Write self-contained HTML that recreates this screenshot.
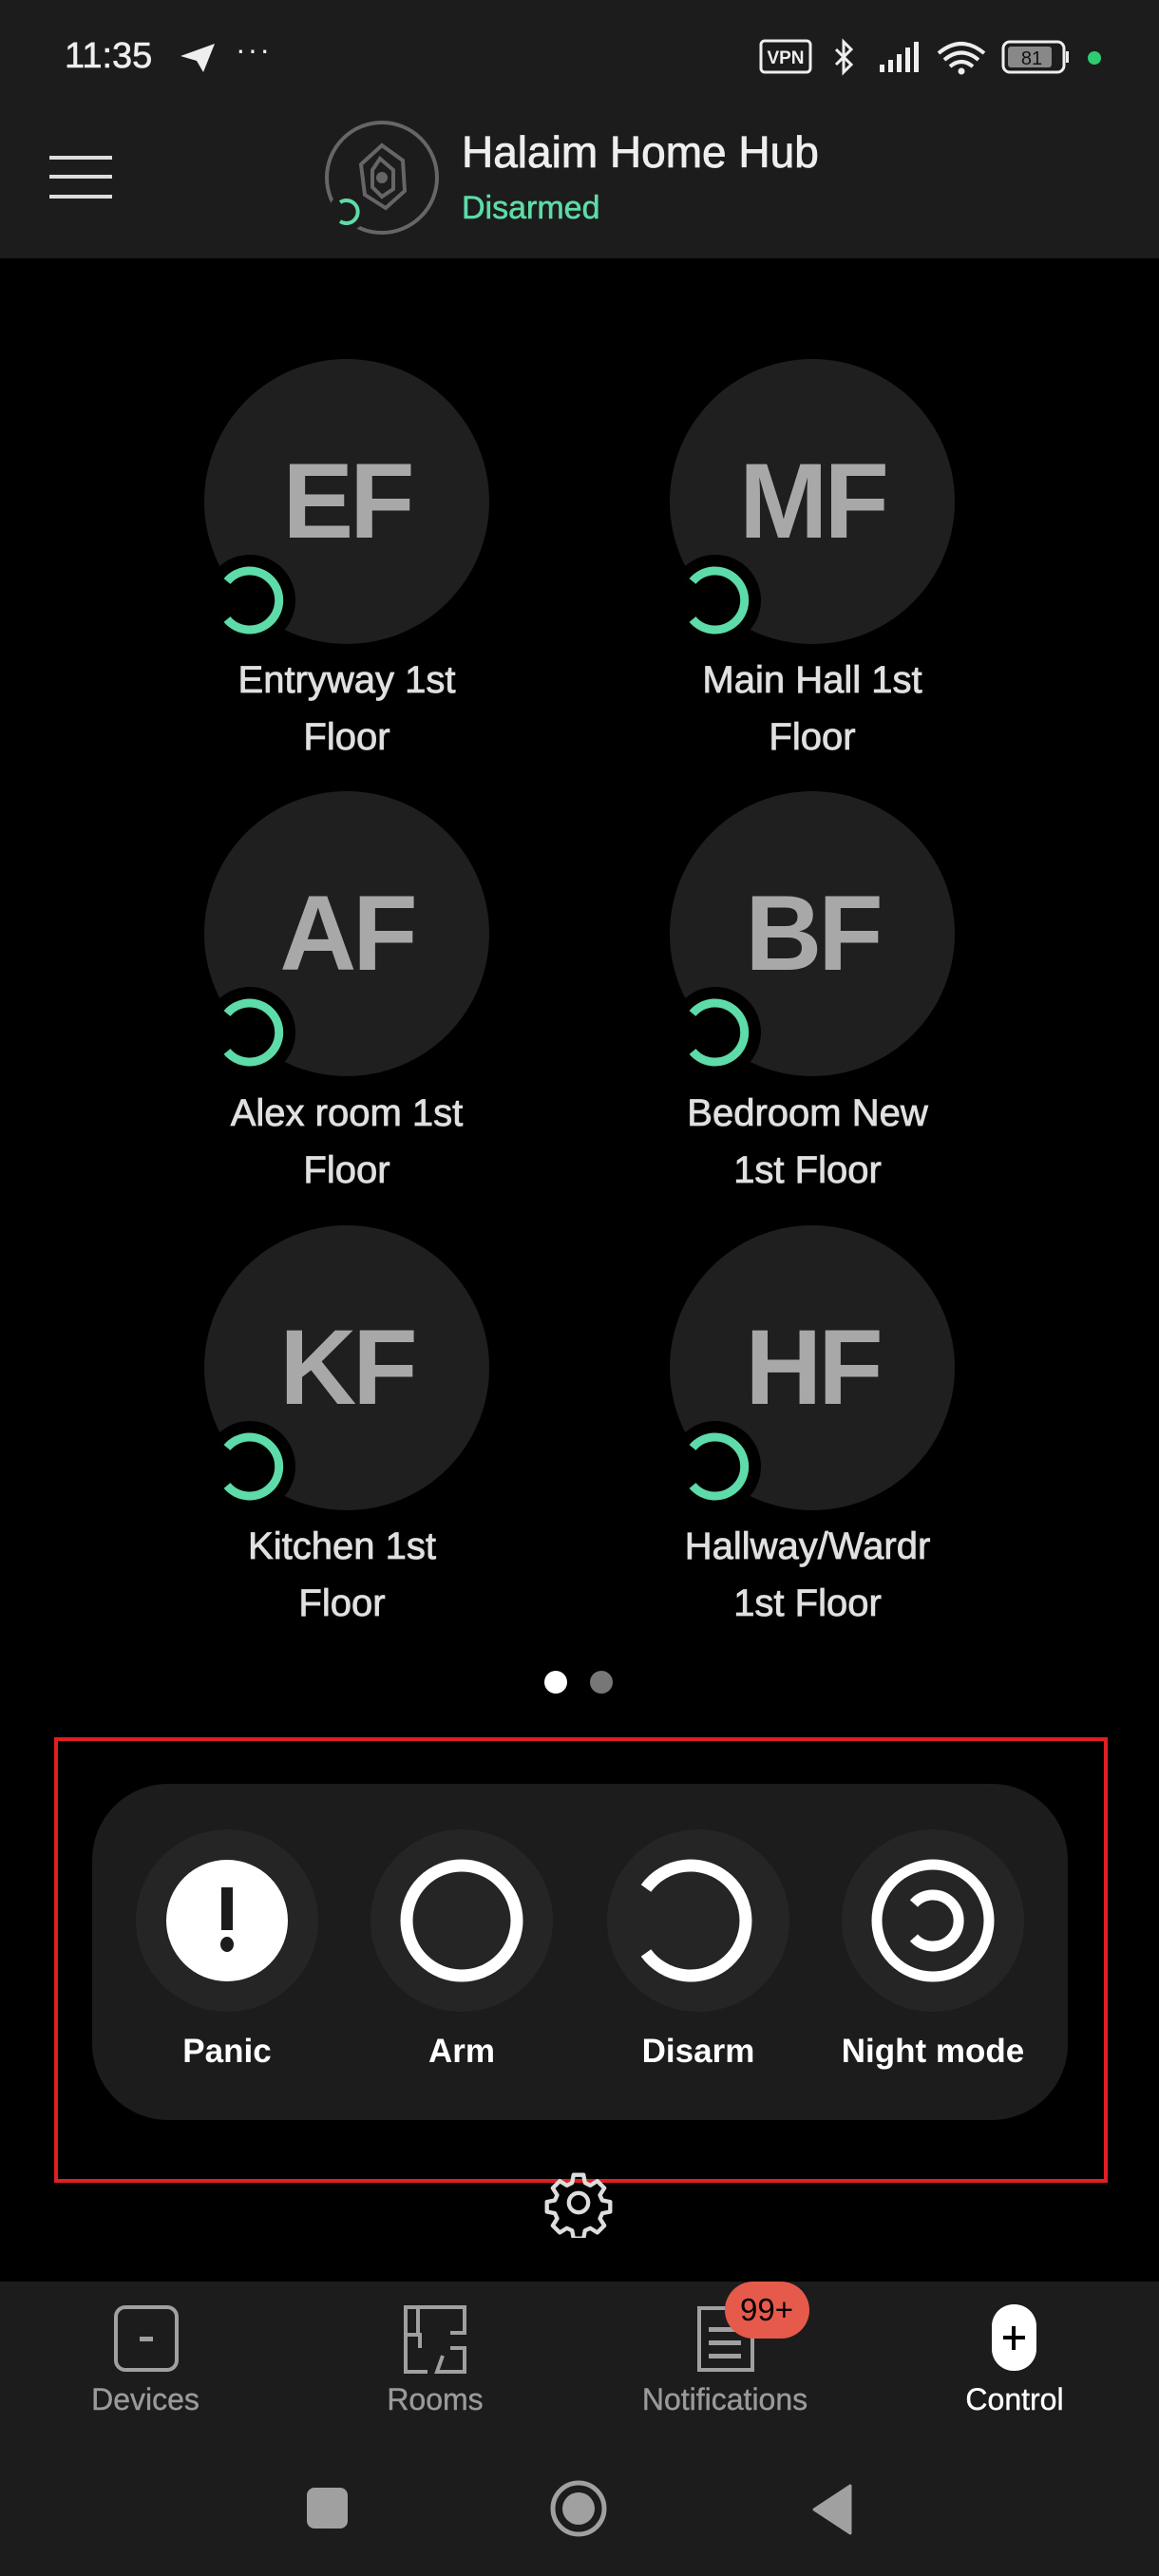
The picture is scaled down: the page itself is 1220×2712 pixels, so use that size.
<!DOCTYPE html>
<html><head><meta charset="utf-8"><style>
*{margin:0;padding:0;box-sizing:border-box}
body{width:1220px;height:2712px;background:#000;font-family:"Liberation Sans",sans-serif;position:relative;overflow:hidden;color:#fff}
.abs{position:absolute}
.room{position:absolute;width:300px;height:300px;border-radius:50%;background:#1f1f1f;color:#a8a8a8;font-size:112px;font-weight:bold;text-align:center;line-height:300px;letter-spacing:-4px}
.lbl{position:absolute;width:360px;text-align:center;color:#e0e0e0;font-size:40px;line-height:60px;-webkit-text-stroke:0.8px #e0e0e0}
.btnlbl{position:absolute;width:240px;text-align:center;font-size:35px;font-weight:bold;top:2140px;color:#fff}
.nav{position:absolute;width:260px;text-align:center;font-size:32px;color:#9a9a9a;top:2508px;-webkit-text-stroke:0.4px #9a9a9a}
</style></head><body>
<div class="abs" style="left:0;top:0;width:1220px;height:272px;background:#1c1c1c"></div>
<div class="abs" style="left:68px;top:38px;font-size:38px;color:#eee;-webkit-text-stroke:0.6px #eee">11:35</div>
<svg class="abs" style="left:188px;top:44px" width="40" height="34" viewBox="0 0 40 34"><path d="M2 15 L38 2 L26 32 L19 20 Z" fill="#eee"/></svg>
<div class="abs" style="left:248px;top:34px;font-size:32px;color:#eee;letter-spacing:2px">···</div>
<svg class="abs" style="left:798px;top:40px" width="370" height="42" viewBox="0 0 370 42">
<rect x="3" y="3" width="52" height="33" rx="4" fill="none" stroke="#eee" stroke-width="3"/>
<text x="29" y="27" font-size="19" fill="#eee" text-anchor="middle" font-family="Liberation Sans" font-weight="bold">VPN</text>
<path d="M82 12 L98 28 L90 36 L90 4 L98 12 L82 28" fill="none" stroke="#eee" stroke-width="3"/>
<rect x="128" y="28" width="5" height="8" fill="#eee"/><rect x="137" y="23" width="5" height="13" fill="#eee"/><rect x="146" y="17" width="5" height="19" fill="#eee"/><rect x="155" y="10" width="5" height="26" fill="#eee"/><rect x="164" y="4" width="5" height="32" fill="#eee"/>
<path d="M190 16 Q214 -4 238 16 M196 23 Q214 8 232 23 M202 30 Q214 20 226 30" fill="none" stroke="#eee" stroke-width="4"/><circle cx="214" cy="35" r="3.5" fill="#eee"/>
<rect x="258" y="4" width="64" height="32" rx="7" fill="none" stroke="#eee" stroke-width="3"/><rect x="263" y="9" width="46" height="22" rx="3" fill="#888"/>
<text x="288" y="28" font-size="20" fill="#111" text-anchor="middle" font-family="Liberation Sans">81</text>
<rect x="324" y="14" width="3" height="12" fill="#eee"/>
<circle cx="354" cy="21" r="7" fill="#2ecc71"/>
</svg>
<div class="abs" style="left:52px;top:164px;width:66px;height:4px;background:#ddd"></div>
<div class="abs" style="left:52px;top:184px;width:66px;height:4px;background:#ddd"></div>
<div class="abs" style="left:52px;top:205px;width:66px;height:4px;background:#ddd"></div>
<svg class="abs" style="left:340px;top:125px" width="125" height="125" viewBox="0 0 125 125">
<circle cx="62" cy="62" r="58" fill="none" stroke="#666" stroke-width="4"/>
<path d="M62 28 L84 44 L86 76 L66 94 L44 80 L40 48 Z" fill="none" stroke="#666" stroke-width="4"/>
<path d="M60 42 L74 54 L74 74 L62 82 L52 72 L52 54 Z" fill="none" stroke="#666" stroke-width="4"/>
<circle cx="62" cy="62" r="6" fill="#666"/>
<circle cx="26" cy="98" r="20" fill="#1c1c1c"/>
<path d="M18 88 A12 12 0 1 1 18 108" fill="none" stroke="#5ddba8" stroke-width="4"/>
</svg>
<div class="abs" style="left:486px;top:133px;font-size:46px;color:#eee;-webkit-text-stroke:0.8px #eee">Halaim Home Hub</div>
<div class="abs" style="left:486px;top:200px;font-size:34px;color:#5ddba8;-webkit-text-stroke:0.6px #5ddba8">Disarmed</div>

<div class="room" style="left:215px;top:378px">EF</div>
<div class="room" style="left:705px;top:378px">MF</div>
<div class="room" style="left:215px;top:833px">AF</div>
<div class="room" style="left:705px;top:833px">BF</div>
<div class="room" style="left:215px;top:1290px">KF</div>
<div class="room" style="left:705px;top:1290px">HF</div>
<svg class="abs" style="left:0;top:0" width="1220" height="1600">
<defs><g id="st"><circle r="48" fill="#000"/><path d="M-24 -20 A31 31 0 1 1 -24 20" fill="none" stroke="#5ddba8" stroke-width="9"/></g></defs>
<use href="#st" x="263" y="632"/><use href="#st" x="753" y="632"/>
<use href="#st" x="263" y="1087"/><use href="#st" x="753" y="1087"/>
<use href="#st" x="263" y="1544"/><use href="#st" x="753" y="1544"/>
</svg>
<div class="lbl" style="left:185px;top:686px">Entryway 1st<br>Floor</div>
<div class="lbl" style="left:675px;top:686px">Main Hall 1st<br>Floor</div>
<div class="lbl" style="left:185px;top:1142px">Alex room 1st<br>Floor</div>
<div class="lbl" style="left:670px;top:1142px">Bedroom New<br>1st Floor</div>
<div class="lbl" style="left:180px;top:1598px">Kitchen 1st<br>Floor</div>
<div class="lbl" style="left:670px;top:1598px">Hallway/Wardr<br>1st Floor</div>
<div class="abs" style="left:573px;top:1759px;width:24px;height:24px;border-radius:50%;background:#fff"></div>
<div class="abs" style="left:621px;top:1759px;width:24px;height:24px;border-radius:50%;background:#777"></div>

<div class="abs" style="left:57px;top:1829px;width:1109px;height:469px;border:4px solid #e02020"></div>
<div class="abs" style="left:97px;top:1878px;width:1027px;height:354px;border-radius:80px;background:#1c1c1c"></div>
<svg class="abs" style="left:0;top:1900px" width="1220" height="250">
<circle cx="239" cy="122" r="96" fill="#252525"/><circle cx="486" cy="122" r="96" fill="#252525"/><circle cx="735" cy="122" r="96" fill="#252525"/><circle cx="982" cy="122" r="96" fill="#252525"/>
<circle cx="239" cy="122" r="64" fill="#fff"/><rect x="233" y="87" width="12" height="45" fill="#1c1c1c"/><ellipse cx="239" cy="147" rx="7" ry="8" fill="#1c1c1c"/>
<circle cx="486" cy="122" r="58" fill="none" stroke="#fff" stroke-width="13"/>
<path d="M680 88 A58 58 0 1 1 680 156" fill="none" stroke="#fff" stroke-width="13"/>
<circle cx="982" cy="122" r="59" fill="none" stroke="#fff" stroke-width="11"/>
<path d="M962 104 A27 27 0 1 1 962 140" fill="none" stroke="#fff" stroke-width="11"/>
</svg>
<div class="btnlbl" style="left:119px">Panic</div>
<div class="btnlbl" style="left:366px">Arm</div>
<div class="btnlbl" style="left:615px">Disarm</div>
<div class="btnlbl" style="left:862px">Night mode</div>
<svg class="abs" style="left:572px;top:2282px" width="74" height="74" viewBox="0 0 24 24"><path d="M10.3 2.5h3.4l.5 2.7 1.8.9 2.4-1.5 2.4 2.4-1.5 2.4.8 1.8 2.7.5v3.4l-2.7.5-.8 1.8 1.5 2.4-2.4 2.4-2.4-1.5-1.8.8-.5 2.7h-3.4l-.5-2.7-1.8-.8-2.4 1.5-2.4-2.4 1.5-2.4-.8-1.8-2.7-.5v-3.4l2.7-.5.8-1.8-1.5-2.4 2.4-2.4 2.4 1.5 1.8-.9z" fill="none" stroke="#ddd" stroke-width="1.4" stroke-linejoin="round"/><circle cx="12" cy="12" r="3.3" fill="none" stroke="#ddd" stroke-width="1.4"/></svg>

<div class="abs" style="left:0;top:2402px;width:1220px;height:310px;background:#1c1c1c"></div>
<svg class="abs" style="left:0;top:2400px" width="1220" height="110">
<rect x="122" y="29" width="64" height="66" rx="10" fill="none" stroke="#a0a0a0" stroke-width="4"/><rect x="147" y="60" width="14" height="5" fill="#a0a0a0"/>
<path d="M440 58 V29 H489 V56 H474 M474 72 H489 V97 H460 L466 80 M450 97 H427 V29 H440 M427 58 H442 V72" fill="none" stroke="#a0a0a0" stroke-width="4"/>
<rect x="736" y="30" width="56" height="65" fill="none" stroke="#a0a0a0" stroke-width="4"/>
<rect x="746" y="50" width="34" height="5" fill="#a0a0a0"/><rect x="746" y="64" width="34" height="5" fill="#a0a0a0"/><rect x="746" y="78" width="34" height="5" fill="#a0a0a0"/>
<rect x="763" y="2" width="89" height="60" rx="30" fill="#e55a4a"/>
<text x="807" y="43" font-size="33" fill="#000" text-anchor="middle" font-family="Liberation Sans">99+</text>
<rect x="1044" y="26" width="47" height="70" rx="23" fill="#fff"/><rect x="1056" y="59" width="23" height="4" fill="#000"/><rect x="1065" y="49" width="4" height="25" fill="#000"/>
</svg>
<div class="nav" style="left:23px">Devices</div>
<div class="nav" style="left:328px">Rooms</div>
<div class="nav" style="left:633px">Notifications</div>
<div class="nav" style="left:938px;color:#fff;-webkit-text-stroke:0.4px #fff">Control</div>
<div class="abs" style="left:323px;top:2619px;width:43px;height:43px;border-radius:8px;background:#a0a0a0"></div>
<svg class="abs" style="left:575px;top:2608px" width="70" height="70"><circle cx="34" cy="33" r="27" fill="none" stroke="#a0a0a0" stroke-width="5"/><circle cx="34" cy="33" r="17" fill="#a0a0a0"/></svg>
<svg class="abs" style="left:850px;top:2612px" width="50" height="60"><path d="M45 5 V55 L7 30 Z" fill="#a0a0a0" stroke="#a0a0a0" stroke-width="3" stroke-linejoin="round"/></svg>
</body></html>
